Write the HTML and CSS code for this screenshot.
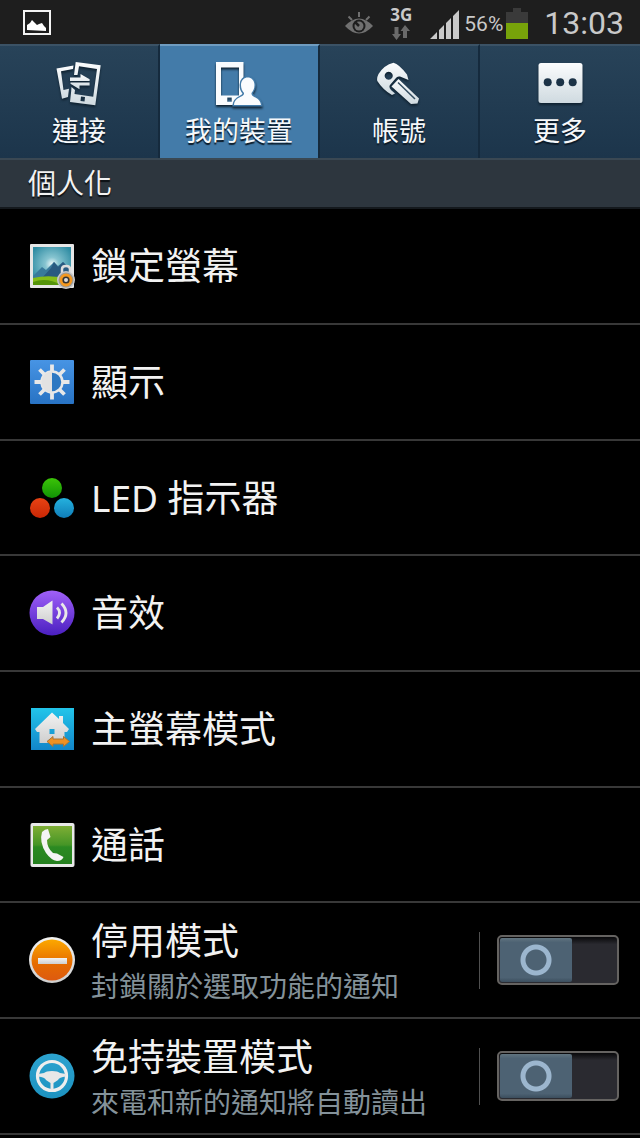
FILE: index.html
```html
<!DOCTYPE html>
<html lang="zh-Hant">
<head>
<meta charset="utf-8">
<meta name="viewport" content="width=device-width, initial-scale=1">
<title>設定</title>
<link rel="stylesheet" href="styles.css">
</head>
<body>
<svg class="defs" aria-hidden="true">
  <defs>
    <linearGradient id="metal" x1="0" y1="0" x2="0" y2="1"><stop offset="0" stop-color="#fbfcfd"/><stop offset="1" stop-color="#cfdae0"/></linearGradient>
    <linearGradient id="silver" x1="0" y1="0" x2="0" y2="1"><stop offset="0" stop-color="#f2f2f2"/><stop offset="1" stop-color="#cfcfcf"/></linearGradient>
    <radialGradient id="sky" cx=".5" cy=".45" r=".6"><stop offset="0" stop-color="#f0fafa"/><stop offset=".3" stop-color="#86c4d0"/><stop offset="1" stop-color="#2f8ca3"/></radialGradient>
    <linearGradient id="blue" x1="0" y1="0" x2="0" y2="1"><stop offset="0" stop-color="#4794e4"/><stop offset="1" stop-color="#2873c4"/></linearGradient>
    <linearGradient id="green" x1="0" y1="0" x2="0" y2="1"><stop offset="0" stop-color="#3cc408"/><stop offset="1" stop-color="#109305"/></linearGradient>
    <linearGradient id="red" x1="0" y1="0" x2="0" y2="1"><stop offset="0" stop-color="#e84314"/><stop offset="1" stop-color="#c92705"/></linearGradient>
    <linearGradient id="cyan" x1="0" y1="0" x2="0" y2="1"><stop offset="0" stop-color="#25b1de"/><stop offset="1" stop-color="#0f7db8"/></linearGradient>
    <linearGradient id="violet" x1="0" y1="0" x2="0" y2="1"><stop offset="0" stop-color="#a060f8"/><stop offset="1" stop-color="#4a1fc0"/></linearGradient>
    <linearGradient id="aqua" x1="0" y1="0" x2="0" y2="1"><stop offset="0" stop-color="#22c5ea"/><stop offset="1" stop-color="#1285c9"/></linearGradient>
    <linearGradient id="leaf" x1="0" y1="0" x2="0" y2="1"><stop offset="0" stop-color="#7fae35"/><stop offset=".5" stop-color="#459526"/><stop offset=".55" stop-color="#2b8a22"/><stop offset="1" stop-color="#25801f"/></linearGradient>
    <linearGradient id="orange" x1="0" y1="0" x2="0" y2="1"><stop offset="0" stop-color="#fca800"/><stop offset=".6" stop-color="#e56a00"/><stop offset="1" stop-color="#dd5a10"/></linearGradient>
    <linearGradient id="wheel" x1="0" y1="0" x2="0" y2="1"><stop offset="0" stop-color="#2ca3cf"/><stop offset="1" stop-color="#1d92c0"/></linearGradient>
  </defs>
</svg>

<header class="status">
  <svg class="status-picture" width="28" height="26" viewBox="0 0 28 26" aria-hidden="true">
    <path d="M1 1h26v23H1z" fill="none" stroke="#f4f4f4" stroke-width="2"/>
    <path d="M4 20v-5l3-2 2-3 5 5 2-1 3-1 2 3 2 2v3z" fill="#fff"/>
  </svg>
  <svg class="status-eye" width="28" height="22" viewBox="0 0 28 22" aria-hidden="true">
    <path d="M14 0v5M3.500 4.500l3.500 3.500M24.500 4.500l-3.500 3.500" stroke="#707070" stroke-width="2"/>
    <path d="M0 14Q14 -1 28 14Q14 29 0 14z" fill="#707070"/>
    <circle cx="14" cy="14" r="6.500" fill="#1e1e1e"/>
    <circle cx="14" cy="14" r="4.500" fill="#707070"/>
    <path d="M10 10l4 4" stroke="#1e1e1e" stroke-width="2.500"/>
  </svg>
  <div class="network">
    <span>3G</span>
    <svg width="18" height="15" viewBox="0 0 18 15" aria-hidden="true"><path d="M2.500 2h4v7H9l-4.500 6L0 9h2.500zM11 13h4V6h3l-5-6-4.500 6H11z" fill="#6a6a6a"/></svg>
  </div>
  <svg class="status-signal" width="30" height="30" viewBox="0 0 30 30" aria-hidden="true">
    <path d="M0 30l7-7v7zM9 21l5-5v14H9zM16 14l5-5v21h-5zM23 7l6-6v29h-6z" fill="#c9c9c9"/>
  </svg>
  <span class="percent">56%</span>
  <svg class="status-battery" width="22" height="31" viewBox="0 0 22 31" aria-hidden="true">
    <path d="M0 4h7V0h8v4h7v27H0z" fill="#3a3a3a"/><path d="M0 15h22v16H0z" fill="#77a30a"/>
  </svg>
  <time class="clock">13:03</time>
</header>

<nav class="tabs">
  <button class="tab" type="button">
    <svg class="tab-icon" width="48" height="48" viewBox="0 0 48 48" aria-hidden="true">
      <g fill="url(#metal)">
        <path d="M1.500 8.500L18.500 5.500L18 9L6 11.200L8.500 30L14 28.800L13 37L7 38.800z"/>
        <path fill-rule="evenodd" d="M20.700 2L45.700 5.300L40.300 45.300L15 42L16.200 31L16.500 27L20 30L19.500 34L38.200 36.700L42 9L24 6.300L22.500 15H19zM26 36.500l-.5 4.500 4 .6.5-4.500z"/>
        <path d="M15 17.600H25.500V14L34.600 19.200V21H15zM34.600 22.600V25.600H24.500V29.200L15.500 23.800V22.600z"/>
      </g>
    </svg>
    <span>連接</span>
  </button>
  <button class="tab is-active" type="button" aria-current="page">
    <svg class="tab-icon" width="48" height="48" viewBox="0 0 48 48" aria-hidden="true">
      <path fill="#fafcfe" fill-rule="evenodd" d="M1 2h27.500v43H1zM6 7.600v28h18v-28zM12.300 37.600v4.200h4.400v-4.200z"/>
      <path d="M26 25C26 15 39.500 15 39.500 25C39.500 29 38 31 36.500 33C36 38 45 36 46 45H19C20 36 29.500 38 29 33C27 31 26 28 26 25z" fill="#fafcfe" stroke="#437ba9" stroke-width="3" paint-order="stroke"/>
    </svg>
    <span>我的裝置</span>
  </button>
  <button class="tab" type="button">
    <svg class="tab-icon" width="48" height="48" viewBox="0 0 48 48" aria-hidden="true">
      <path fill="url(#metal)" fill-rule="evenodd" d="M18.500 2.700Q24 4 32 14.500L33.500 20L25 16.500Q22 16 21 18L15 25Q13.500 27 16 30L20 33.500L17 35Q8 30 2.300 21Q1.500 18 3.500 14Q9 5 18.500 2.700zM13.700 11.700a4 4 0 1 0 .01 0z"/>
      <path d="M23.500 19L44 38.500L42.500 43.500L36 44L16.500 26.500z" fill="url(#metal)"/>
      <path d="M23 22.500L40 39" stroke="#334d60" stroke-width="1.500"/>
    </svg>
    <span>帳號</span>
  </button>
  <button class="tab" type="button">
    <svg class="tab-icon" width="48" height="48" viewBox="0 0 48 48" aria-hidden="true">
      <rect x="2.500" y="3" width="44" height="40" rx="2.500" fill="url(#metal)"/>
      <g fill="#1c3347"><circle cx="11.700" cy="22.300" r="4"/><circle cx="24.200" cy="22.300" r="4"/><circle cx="36.700" cy="22.300" r="4"/></g>
    </svg>
    <span>更多</span>
  </button>
</nav>

<main>
  <h1 class="section">個人化</h1>
  <ul class="list">
    <li class="row"><a class="link" href="#lock">
      <svg class="icon" width="46" height="46" viewBox="0 0 46 46" aria-hidden="true">
        <rect x="1" y="1" width="44" height="44" rx="1" fill="#e6e6e6"/>
        <path d="M4 4h38v38H4z" fill="url(#sky)"/>
        <path d="M4 33L13 24L17 27L25 19L29 23L34 19L42 27V37H4z" fill="#397a9b"/>
        <path d="M13 35L22 25L25 19L29 24L34 19L42 27V37z" fill="#295a80"/>
        <path d="M4 35Q20 31 42 36V42H4z" fill="#85bd19"/><path d="M4 39Q18 34 32 42H4z" fill="#55940a"/>
        <path d="M33 30v-4q0-3 4-3t4 3v4" fill="none" stroke="#ddd" stroke-width="2.500"/>
        <circle cx="37" cy="37" r="9" fill="#c9c9c9"/><circle cx="37" cy="37" r="7.500" fill="#999"/>
        <circle cx="37" cy="37" r="5" fill="#333" stroke="#f39820" stroke-width="2.800"/><circle cx="37" cy="37" r="2" fill="#ddd"/>
      </svg>
      <span class="title">鎖定螢幕</span></a></li>
    <li class="row"><a class="link" href="#display">
      <svg class="icon" width="46" height="46" viewBox="0 0 46 46" aria-hidden="true">
        <rect x="1" y="1" width="44" height="44" rx="1" fill="url(#blue)"/>
        <g stroke="#e8e8e8" stroke-width="3.800"><path d="M23 5.500V12M23 34V40.500M5.500 23H12M34 23H40.500M10.500 10.500L15.500 15.500M35.500 10.500L30.500 15.500M10.500 35.500L15.500 30.500M35.500 35.500L30.500 30.500"/></g>
        <circle cx="23" cy="23" r="10.500" fill="#2d78c2" stroke="#e8e8e8" stroke-width="2.500"/>
        <path d="M23 12.500a10.500 10.500 0 0 0 0 21z" fill="#e2e2e2"/>
      </svg>
      <span class="title">顯示</span></a></li>
    <li class="row"><a class="link" href="#led">
      <svg class="icon" width="46" height="46" viewBox="0 0 46 46" aria-hidden="true">
        <circle cx="23" cy="13" r="10" fill="url(#green)"/><circle cx="11" cy="33" r="10" fill="url(#red)"/><circle cx="35" cy="33" r="10" fill="url(#cyan)"/>
      </svg>
      <span class="title">LED 指示器</span></a></li>
    <li class="row"><a class="link" href="#sound">
      <svg class="icon" width="46" height="46" viewBox="0 0 46 46" aria-hidden="true">
        <circle cx="23" cy="23" r="22.500" fill="url(#violet)"/>
        <path d="M8 17H14L23.500 10.500V34.500L14 29H8z" fill="url(#silver)"/>
        <path d="M28 17.500q5 5 0 11M32.500 13.500q9 9.500 0 19" fill="none" stroke="#e8e8e8" stroke-width="2.800"/>
      </svg>
      <span class="title">音效</span></a></li>
    <li class="row"><a class="link" href="#home">
      <svg class="icon" width="46" height="46" viewBox="0 0 46 46" aria-hidden="true">
        <path d="M2 2h43v42H2z" fill="url(#aqua)"/>
        <path fill-rule="evenodd" d="M23 6.500L30 13V10H34V17L40 23L38 26H35.500V37H10.500V26H8L6 23zM20.500 23v5h5v-5z" fill="url(#silver)"/>
        <path d="M18 35.500L24 30.500V33H34.500V30.500L40.500 35.500L34.500 40.500V38H24V40.500z" fill="#ee9124" stroke="#a87536"/>
      </svg>
      <span class="title">主螢幕模式</span></a></li>
    <li class="row"><a class="link" href="#call">
      <svg class="icon" width="46" height="46" viewBox="0 0 46 46" aria-hidden="true">
        <rect x="1.500" y="1" width="44" height="44" rx="2" fill="#e9e9e9"/><path d="M4 4h39v38H4z" fill="url(#leaf)"/>
        <path d="M13 10Q16 7 19 7L21.500 15L18 18Q18 26 24 31L28 31.500L34.500 35Q33 39 28 39Q22 38 17 31Q10 20 13 10z" fill="#f4f4f4"/>
      </svg>
      <span class="title">通話</span></a></li>
    <li class="row">
      <a class="link" href="#blocking">
      <svg class="icon" width="46" height="46" viewBox="0 0 46 46" aria-hidden="true">
        <circle cx="23" cy="23" r="23" fill="url(#silver)"/><circle cx="23" cy="23" r="20.500" fill="url(#orange)"/>
        <path d="M9 21h29v6H9z" fill="url(#silver)"/>
      </svg>
      <span class="texts"><span class="title" id="blocking-title">停用模式</span><span class="note">封鎖關於選取功能的通知</span></span></a>
      <span class="control"><input class="switch" type="checkbox" role="switch" aria-labelledby="blocking-title"></span>
    </li>
    <li class="row">
      <a class="link" href="#handsfree">
      <svg class="icon" width="46" height="46" viewBox="0 0 46 46" aria-hidden="true">
        <circle cx="23" cy="23" r="22.500" fill="url(#wheel)"/>
        <circle cx="23" cy="23" r="14.500" fill="none" stroke="#eee" stroke-width="3.200"/>
        <path d="M9 21L15 20Q17 18 23 18Q29 18 31 20L37 21V23.500Q30 24 29 27L24.500 30V37H21.500V30L17 27Q16 24 9 23.500z" fill="#e8e8e8"/>
      </svg>
      <span class="texts"><span class="title" id="handsfree-title">免持裝置模式</span><span class="note">來電和新的通知將自動讀出</span></span></a>
      <span class="control"><input class="switch" type="checkbox" role="switch" aria-labelledby="handsfree-title"></span>
    </li>
  </ul>
</main>
</body>
</html>
```
FILE: styles.css
```css
* { box-sizing: border-box; }

body {
  margin: 0;
  background: #000;
  color: #f2f2f2;
  font-family: Roboto, "Noto Sans CJK TC", sans-serif;
}

svg { display: block; flex: none; }

.defs { position: absolute; width: 0; height: 0; }

.status {
  display: flex;
  align-items: center;
  height: 44px;
  padding: 2px 16px 0 23px;
  background: #1e1e1e;
  color: #c9c9c9;
}
.status-picture { margin-right: auto; }
.status-eye { margin-right: 17px; }
.network {
  display: flex;
  flex-direction: column;
  align-items: center;
  gap: 3px;
  padding-top: 2px;
  margin-right: 18px;
  font: bold 17px/14px "Open Sans", sans-serif;
}
.status-signal { margin-right: 4px; align-self: flex-end; margin-bottom: 5px; }
.percent { font-size: 21px; line-height: 28px; margin-right: 3px; padding-top: 2px; }
.status-battery { margin-right: 16px; }
.clock { font-size: 32px; line-height: 42px; }

.tabs {
  display: grid;
  grid-template-columns: repeat(4, 1fr);
  background: linear-gradient(#284359, #1c354b);
}
.tab {
  display: flex;
  flex-direction: column;
  align-items: center;
  height: 114px;
  padding: 14px 0 0;
  border: 0;
  border-top: 2px solid #3b5265;
  border-right: 2px solid #152a3d;
  background: none;
  color: #f6f8fa;
  font: 27px/48px Roboto, "Noto Sans CJK TC", sans-serif;
  text-shadow: 0 2px 1px #0b1a28;
}
.tab:last-child { border-right: 0; }
.is-active { background: #437ba9; border-top-color: #6f9cc0; }
.tab-icon { filter: drop-shadow(0 2px 1px #0f2231); }

.section {
  margin: 0;
  padding: 3px 28px 0;
  border-top: 2px solid #3a4853;
  border-bottom: 2px solid #14191d;
  background: #2d363e;
  font-size: 28px;
  font-weight: 400;
  line-height: 44px;
  text-shadow: 0 2px 1px #0c1014;
}

.list { margin: 0; padding: 0; list-style: none; }
.row {
  display: flex;
  align-items: center;
  min-height: 116px;
  padding: 0 21px 0 29px;
  border-bottom: 2px solid #383838;
}
.row:nth-child(3n) { min-height: 115px; }
.link {
  display: flex;
  flex: 1;
  align-items: center;
  gap: 16px;
  min-width: 0;
  color: inherit;
  text-decoration: none;
}
.texts { display: flex; flex-direction: column; padding-top: 8px; }
.title { font: 37px/48px "Noto Sans", "Noto Sans CJK TC", sans-serif; }
.note { color: #84929a; font-size: 28px; line-height: 46px; }

.control {
  display: flex;
  align-items: center;
  height: 57px;
  padding-left: 17px;
  border-left: 1px solid #505050;
}
.switch {
  appearance: none;
  width: 122px;
  height: 50px;
  margin: 0;
  padding: 1px;
  border: 2px solid #656361;
  border-radius: 5px;
  background: linear-gradient(#08080a, #2a2a30 16%);
}
.switch::before {
  content: "";
  display: block;
  width: 72px;
  height: 44px;
  border-radius: 2px;
  background:
    radial-gradient(circle, transparent 10px, #9cb6ce 11px, #9cb6ce 15px, transparent 16px),
    linear-gradient(#61747f, #4d6273 10%, #4d6273 90%, #3b4e5d);
}
.switch:checked::before { margin-left: auto; }
```
